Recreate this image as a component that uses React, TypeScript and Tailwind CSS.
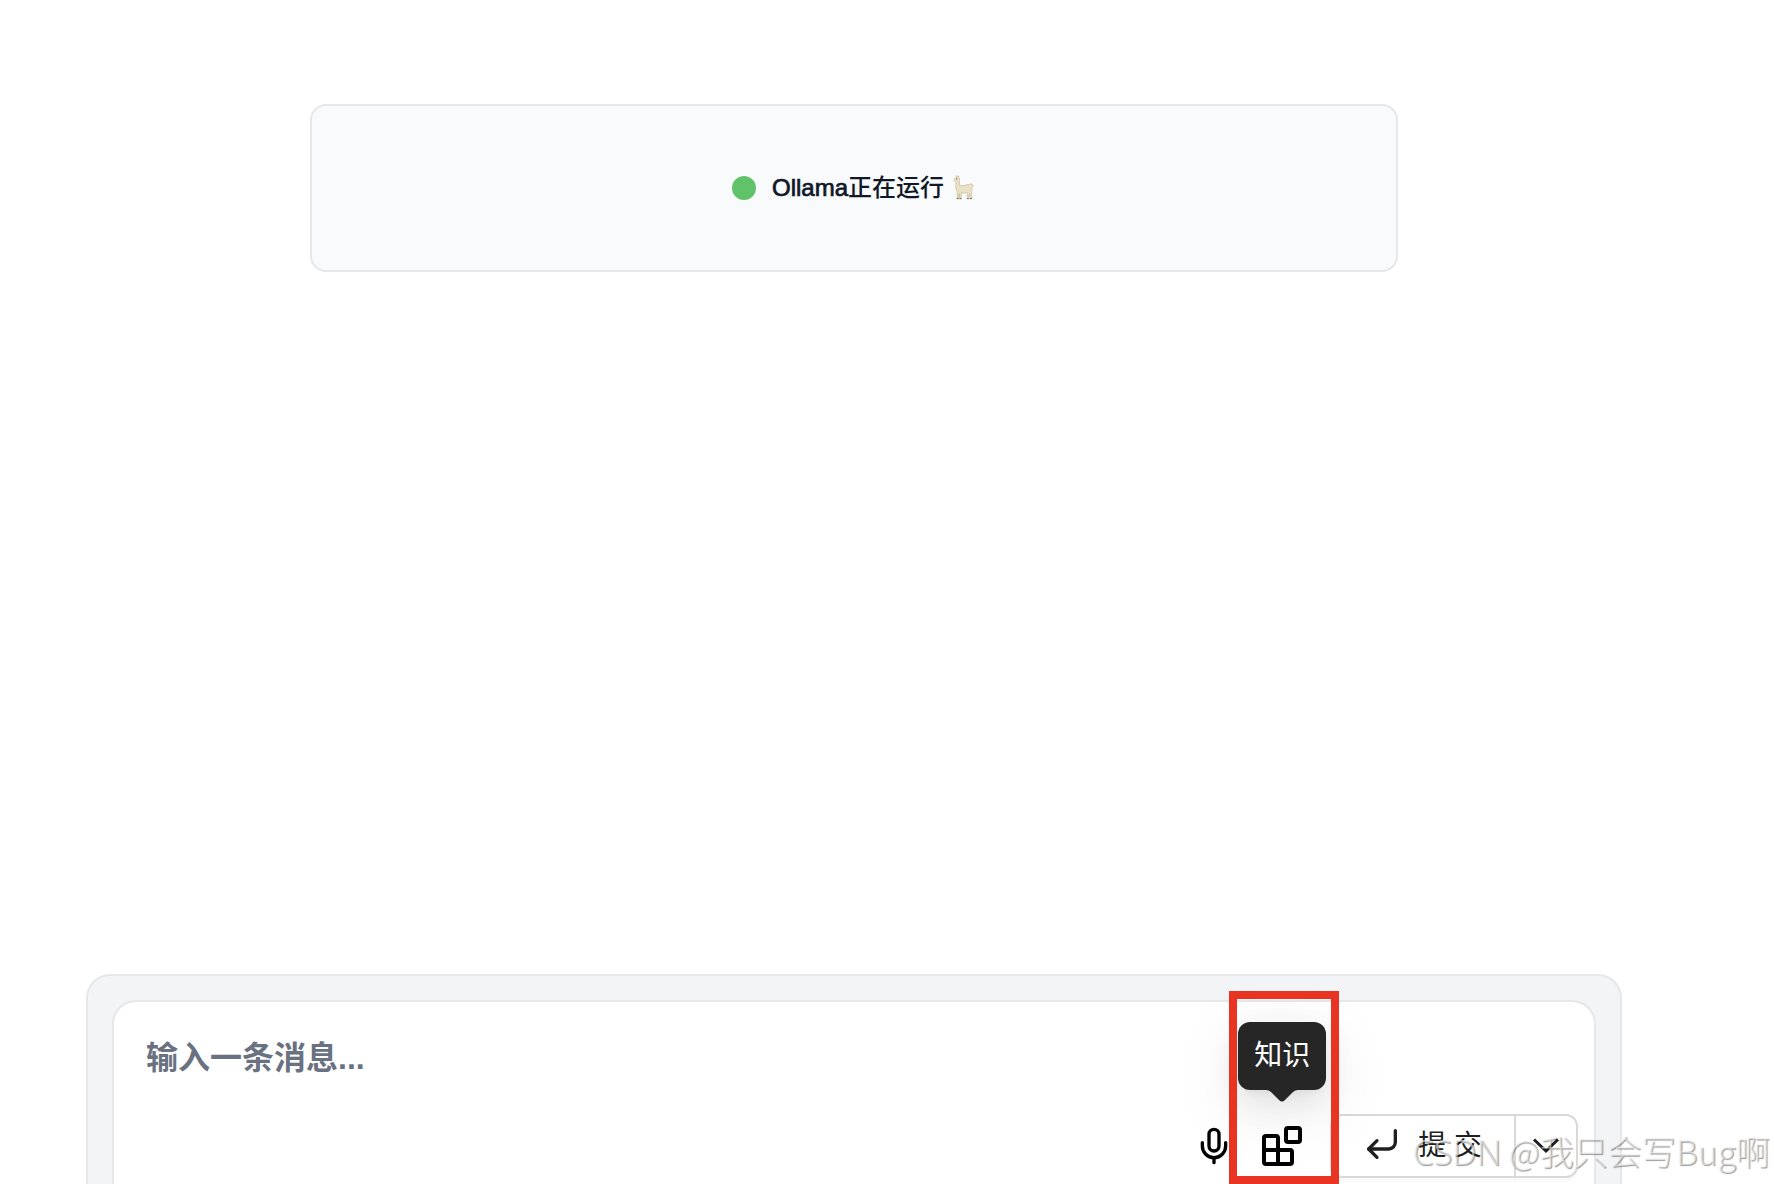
import React from 'react';
import { CornerDownLeft, Mic } from 'lucide-react';

const Llama: React.FC = () => (
    <svg viewBox="0 0 24 28" className="h-7 w-6" role="img" aria-label="llama">
        <path
            d="M4.200 3.500L4.600 1.500L5.600 3L6.600 1.800L7 3.800C7.700 4.600 7.600 6 7.400 7.200L7.600 11.500C10 12.600 14 10.400 17.500 10.600C18.500 9.600 20.600 9.700 21 11.200C21.300 12.400 20.700 13 20 13.400C20.200 15 19.800 16.300 19.400 17.500L19.900 25H18.200L17.500 19.500L16.800 25H15.200L15.300 18.500C13 19.200 11 19.200 9.400 18.700L9.300 25H7.700L7.300 19.500L6.600 25H5L5.200 17.500C3.800 15.700 3.500 13.500 3.800 11L3.900 7.200L2.200 6.800C1.500 6.300 1.500 5.300 2.200 4.900Z"
            fill="#e9e2c6"
            stroke="#bdb493"
            strokeWidth="0.6"
        />
        <path d="M7.700 24.500H9.300M5 24.500H6.600M15.200 24.500H16.800M18.200 24.500H19.900" stroke="#7d755a" strokeWidth="1" />
        <circle cx="4.800" cy="4.800" r="0.600" fill="#4b4636" />
    </svg>
);

const BlocksIcon: React.FC = () => (
    <svg
        viewBox="0 0 24 24"
        className="size-12"
        fill="none"
        stroke="currentColor"
        strokeWidth="2"
        strokeLinecap="round"
        strokeLinejoin="round"
        aria-hidden="true"
    >
        <rect width="7" height="7" x="14" y="3" rx="1" />
        <path d="M10 21V8a1 1 0 0 0-1-1H4a1 1 0 0 0-1 1v12a1 1 0 0 0 1 1h12a1 1 0 0 0 1-1v-5a1 1 0 0 0-1-1H3" />
    </svg>
);

const App: React.FC = () => {
    return (
        <div className="relative flex h-screen flex-col overflow-hidden bg-white pr-[66px] font-['Liberation_Sans','Noto_Sans_CJK_SC',sans-serif]">
            <main className="flex flex-1 flex-col items-center pt-[104px]">
                <section className="flex h-[168px] w-full max-w-[1088px] items-center justify-center rounded-2xl border-2 border-gray-200 bg-[#f9fafc]">
                    <span className="mr-4 size-6 rounded-full bg-[#61c26a]" />
                    <p className="mr-2 text-2xl font-medium text-gray-900">
                        <span className="[-webkit-text-stroke:0.03em]">Ollama</span>正在运行
                    </p>
                    <Llama />
                </section>
            </main>

            <form className="mx-auto w-full max-w-[1536px] rounded-t-3xl border-2 border-b-0 border-gray-200 bg-gray-100 px-6 pt-6">
                <div className="rounded-t-3xl border-2 border-b-0 border-gray-200 bg-white">
                    <textarea
                        aria-label="消息"
                        placeholder="输入一条消息..."
                        className="block h-28 w-full resize-none px-8 pt-8 text-[32px] leading-12 font-bold outline-none placeholder:text-gray-500"
                    />
                    <div className="flex items-center justify-end gap-6 pr-4 pb-1.5">
                        <button type="button" aria-label="语音">
                            <Mic className="size-10" />
                        </button>
                        <div className="relative flex">
                            <button type="button" aria-describedby="knowledge-tip">
                                <BlocksIcon />
                            </button>
                            {/* ツールチップ */}
                            <div
                                id="knowledge-tip"
                                role="tooltip"
                                className="absolute bottom-20 left-1/2 flex h-[68px] w-[88px] -translate-x-1/2 items-center justify-center rounded-xl bg-[#262626] text-[28px] text-white shadow-[0_12px_32px_rgba(0,0,0,0.08),0_6px_12px_-8px_rgba(0,0,0,0.12),0_18px_56px_16px_rgba(0,0,0,0.05)]"
                            >
                                知识
                                <svg viewBox="0 0 32 12" className="absolute top-full h-3 w-8" aria-hidden="true">
                                    <path d="M0 0Q3 0 5 2L13 10Q16 13 19 10L27 2Q29 0 32 0Z" fill="#262626" />
                                </svg>
                            </div>
                            <div className="pointer-events-none absolute -top-[131px] -left-[29px] z-10 h-[193px] w-[110px] border-8 border-[#e93323]" />
                        </div>
                        <div className="flex h-16 text-[28px] text-[#1f1f1f]">
                            <button
                                type="submit"
                                className="flex items-center gap-4 rounded-l-xl border-2 border-[#d9d9d9] bg-white pr-8 pl-[30px] shadow-[0_4px_0_rgba(0,0,0,0.02)]"
                            >
                                <CornerDownLeft className="mb-1 size-10" />
                                提 交
                            </button>
                            <button
                                type="button"
                                aria-label="更多"
                                className="-ml-0.5 flex w-16 items-center justify-center rounded-r-xl border-2 border-[#d9d9d9] bg-white shadow-[0_4px_0_rgba(0,0,0,0.02)]"
                            >
                                <svg viewBox="0 0 28 28" className="size-7" fill="none" stroke="currentColor" strokeWidth="3">
                                    <path d="M2 7.500L14 19L26 7.500" />
                                </svg>
                            </button>
                        </div>
                    </div>
                </div>
            </form>

            <p className="pointer-events-none absolute right-1 bottom-2 text-[34px] leading-12 font-light text-[#f0f0f0]/60 [text-shadow:1px_1px_1px_rgba(0,0,0,0.4)] font-['Noto_Sans_CJK_SC',sans-serif]">
                <span className="font-['Noto_Sans','Noto_Sans_CJK_SC',sans-serif]">CSDN</span> @我只会写Bug啊
            </p>
        </div>
    );
};

export default App;
